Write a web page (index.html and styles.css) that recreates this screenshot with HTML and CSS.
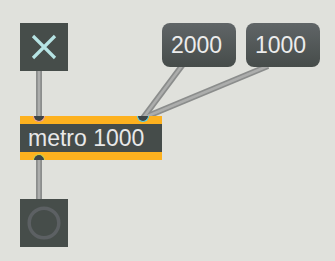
FILE: index.html
```html
<!DOCTYPE html>
<html>
<head>
<meta charset="utf-8">
<link rel="stylesheet" href="styles.css">
</head>
<body>
<div class="patch">
  <svg class="cords" width="335" height="261" viewBox="0 0 335 261">
    <g class="cord-outer">
      <line x1="39" y1="70" x2="39" y2="117"/>
      <line x1="39" y1="159" x2="39" y2="200"/>
      <line x1="143" y1="118" x2="184" y2="63"/>
      <line x1="143" y1="118" x2="268" y2="66"/>
    </g>
    <g class="cord-inner">
      <line x1="39" y1="70" x2="39" y2="117"/>
      <line x1="39" y1="159" x2="39" y2="200"/>
      <line x1="143" y1="118" x2="184" y2="63"/>
      <line x1="143" y1="118" x2="268" y2="66"/>
    </g>
  </svg>

  <div class="obj toggle">
    <svg width="48" height="48" viewBox="0 0 48 48">
      <path d="M13 13 L35 35 M35 13 L13 35" class="x-mark"/>
    </svg>
  </div>

  <div class="obj number n1">2000</div>
  <div class="obj number n2">1000</div>

  <div class="obj metro">
    <div class="metro-body">metro 1000</div>
    <span class="inlet inlet-left"></span>
    <span class="inlet inlet-right"></span>
    <span class="outlet"></span>
  </div>

  <div class="obj bang">
    <svg width="48" height="48" viewBox="0 0 48 48">
      <circle cx="24" cy="24" r="14.8" class="bang-ring"/>
    </svg>
  </div>
</div>
</body>
</html>
```

FILE: styles.css
```css
html, body {
  margin: 0;
  padding: 0;
  background: #e0e1dc;
}

.patch {
  position: relative;
  width: 335px;
  height: 261px;
  overflow: hidden;
  font-family: "Liberation Sans", Arial, sans-serif;
}

.cords {
  position: absolute;
  left: 0;
  top: 0;
}

.cord-outer line {
  stroke: #8b8d8c;
  stroke-width: 6;
}

.cord-inner line {
  stroke: #acadac;
  stroke-width: 2.5;
}

.obj {
  position: absolute;
  box-sizing: border-box;
}

.toggle {
  left: 20px;
  top: 23px;
  width: 48px;
  height: 48px;
  background: #464d4a;
}

.toggle svg,
.bang svg {
  display: block;
}

.x-mark {
  stroke: #b6e4e4;
  stroke-width: 3.2;
  fill: none;
}

.number {
  top: 23px;
  width: 74px;
  height: 44px;
  border-radius: 8px;
  background: linear-gradient(to bottom, #606567, #464c4a);
  color: #ececec;
  font-size: 23px;
  line-height: 44px;
  padding-left: 9px;
}

.n1 { left: 162px; }
.n2 { left: 246px; }

.metro {
  left: 20px;
  top: 116px;
  width: 142px;
  height: 44px;
  background: #fdb11f;
  display: flex;
  flex-direction: column;
  justify-content: center;
}

.metro-body {
  height: 28px;
  background: #454c4a;
  color: #e8e8e8;
  font-size: 23px;
  line-height: 28px;
  padding-left: 8px;
}

.inlet {
  position: absolute;
  top: 0;
  width: 10px;
  height: 5px;
  background: #3e4547;
  border: 1px solid #f2a49a;
  border-top: none;
  border-radius: 0 0 6px 6px;
}

.inlet-left { left: 13px; }
.inlet-right {
  left: 117px;
  border-color: #5fd2ea;
}

.outlet {
  position: absolute;
  bottom: 0;
  left: 13px;
  width: 10px;
  height: 5px;
  background: #3e4547;
  border: 1px solid #cdd84e;
  border-bottom: none;
  border-radius: 6px 6px 0 0;
}

.bang {
  left: 20px;
  top: 199px;
  width: 48px;
  height: 48px;
  background: #464d4a;
}

.bang-ring {
  fill: none;
  stroke: #5c6063;
  stroke-width: 3.5;
}
```
